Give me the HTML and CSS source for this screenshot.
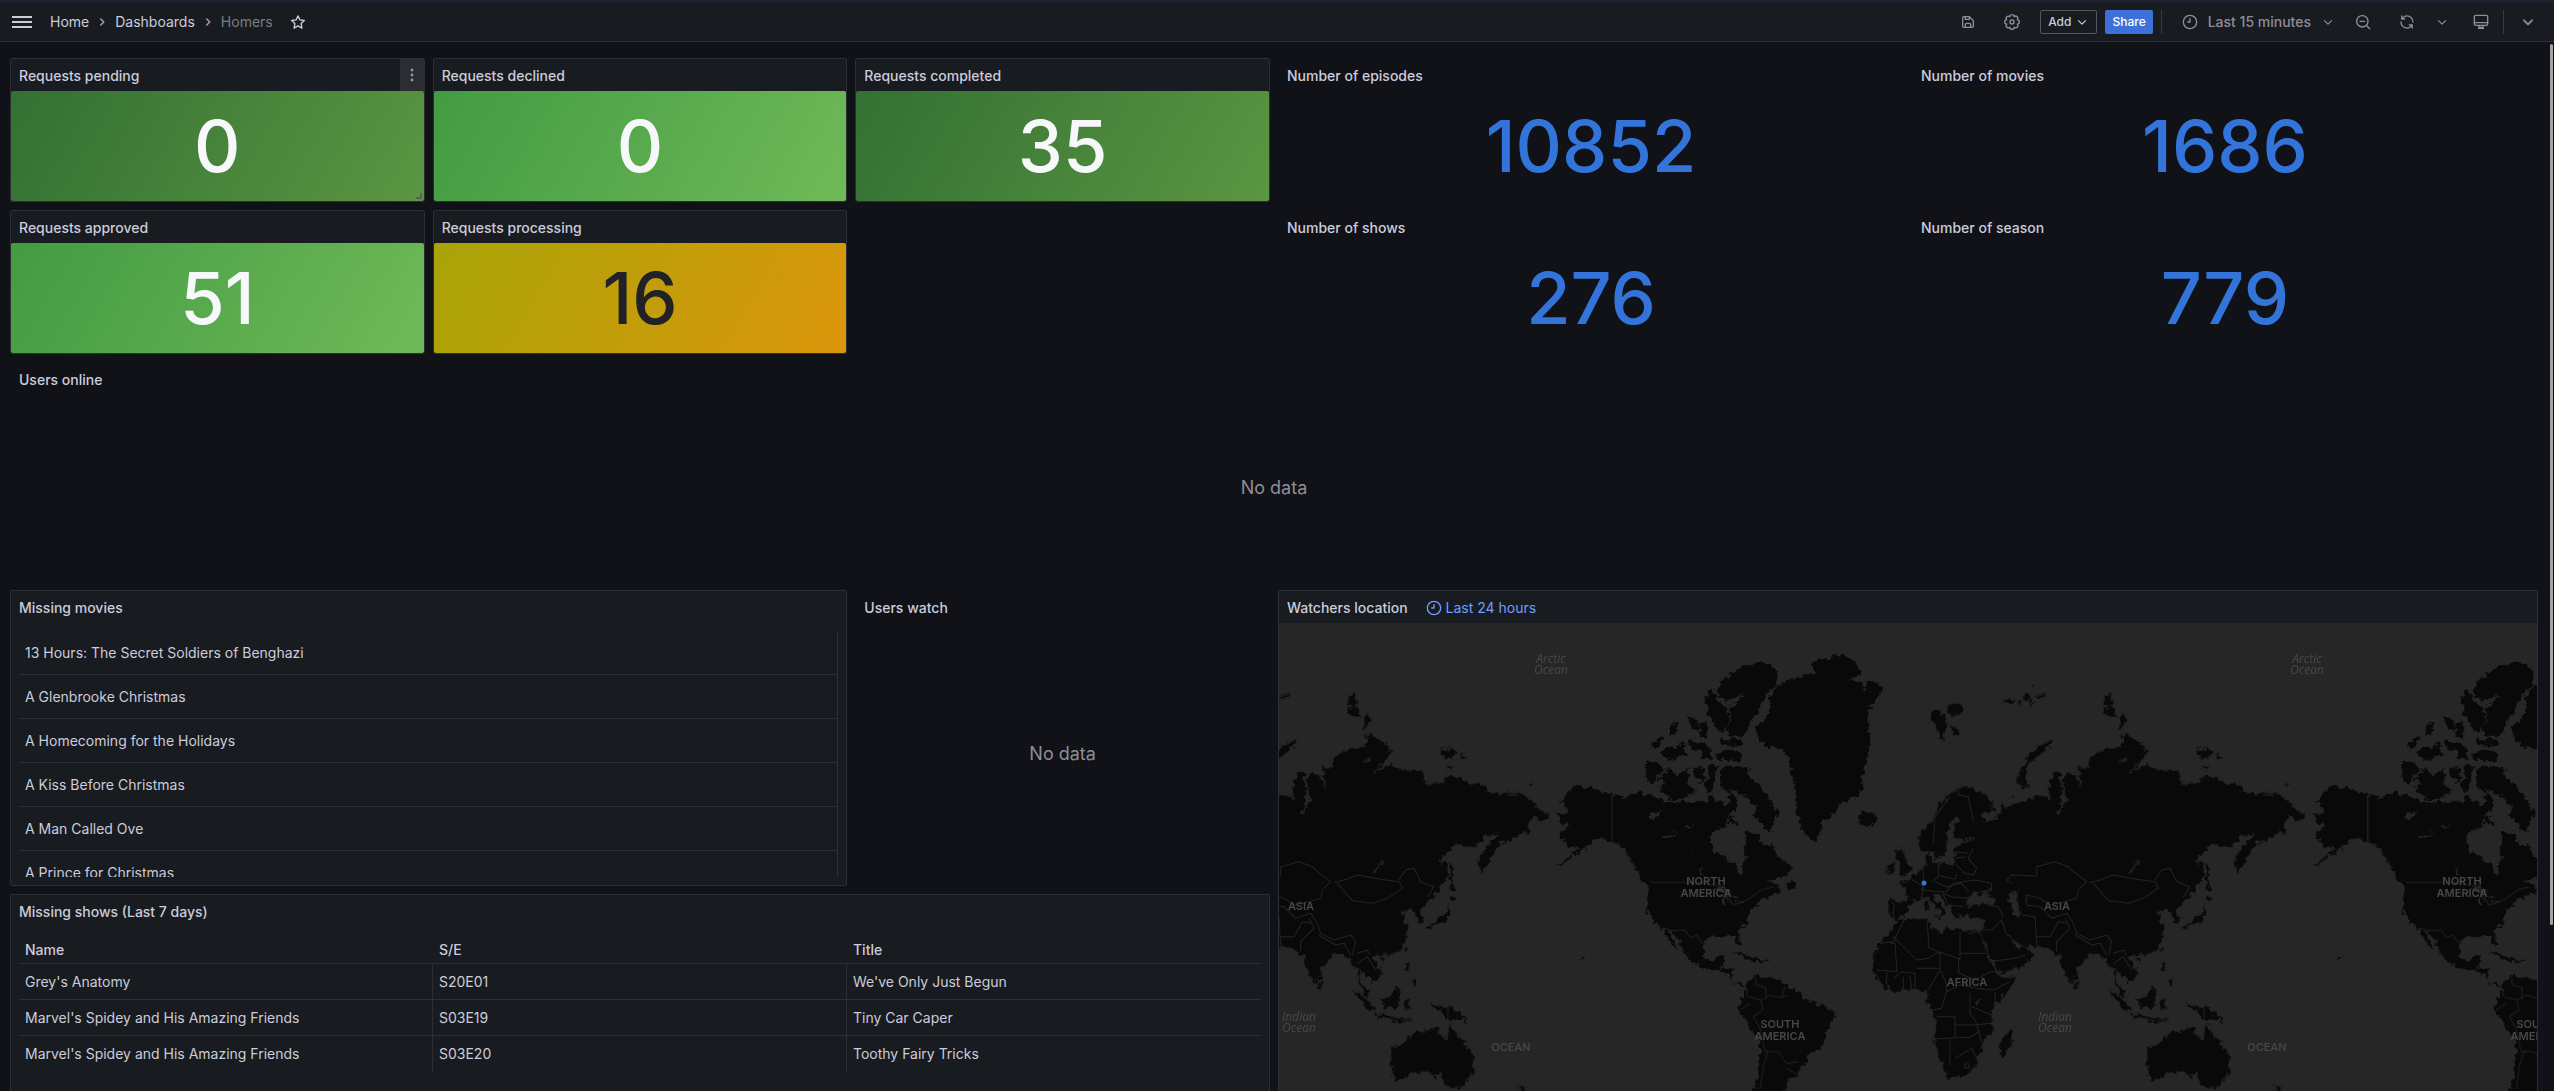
FILE: index.html
```html
<!DOCTYPE html>
<html lang="en">
<head>
<meta charset="utf-8">
<title>Homers - Dashboards</title>
<link rel="stylesheet" href="styles.css">
</head>
<body>
<svg class="defs" aria-hidden="true">
  <symbol id="i-angle" viewBox="0 0 24 24"><path class="line" d="M6 9.500l6 6 6-6"/></symbol>
  <symbol id="i-clock" viewBox="0 0 24 24"><circle class="line" cx="12" cy="12" r="10"/><path class="line" d="M12 7v5H8.500"/></symbol>
  <symbol id="i-save" viewBox="0 0 24 24"><path d="m20.71 9.290-6-6a1 1 0 0 0-.32-.21A1.090 1.090 0 0 0 14 3H6a3 3 0 0 0-3 3v12a3 3 0 0 0 3 3h12a3 3 0 0 0 3-3v-8a1 1 0 0 0-.29-.71ZM9 5h4v2H9Zm6 14H9v-3a1 1 0 0 1 1-1h4a1 1 0 0 1 1 1Zm4-1a1 1 0 0 1-1 1h-1v-3a3 3 0 0 0-3-3h-4a3 3 0 0 0-3 3v3H6a1 1 0 0 1-1-1V6a1 1 0 0 1 1-1h1v3a1 1 0 0 0 1 1h6a1 1 0 0 0 1-1V6.410l4 4Z"/></symbol>
  <symbol id="i-cog" viewBox="0 0 24 24"><path class="line" d="M19.800 8.800A3.200 3.200 0 0 1 19.800 15.200A3.200 3.200 0 0 1 15.200 19.800A3.200 3.200 0 0 1 8.800 19.800A3.200 3.200 0 0 1 4.200 15.200A3.200 3.200 0 0 1 4.200 8.800A3.200 3.200 0 0 1 8.800 4.200A3.200 3.200 0 0 1 15.200 4.200A3.200 3.200 0 0 1 19.800 8.800Z"/><circle class="line" cx="12" cy="12" r="3"/></symbol>
  <symbol id="i-zoom-out" viewBox="0 0 24 24"><circle class="line" cx="11" cy="11" r="8.500"/><path class="line" d="M7.500 11h7M17.500 17.500l4.500 4.500"/></symbol>
  <symbol id="i-sync" viewBox="0 0 24 24"><path d="M19.910 15.510h-4.530a1 1 0 0 0 0 2h2.400A8 8 0 0 1 4 12a1 1 0 1 0-2 0 10 10 0 0 0 16.880 7.230V21a1 1 0 0 0 2 0v-4.500a1 1 0 0 0-.970-.990ZM12 2a10 10 0 0 0-6.880 2.770V3a1 1 0 0 0-2 0v4.500a1 1 0 0 0 1 1h4.500a1 1 0 0 0 0-2h-2.400A8 8 0 0 1 20 12a1 1 0 0 0 2 0A10 10 0 0 0 12 2Z"/></symbol>
  <symbol id="i-monitor" viewBox="0 0 24 24"><rect class="line" x="2" y="2" width="20" height="15" rx="2"/><path class="line" d="M2 13h20M9 17v3h6v-3M8 21.500h8"/></symbol>
  <symbol id="i-star" viewBox="0 0 24 24"><path class="line" d="M12 2.800l2.900 6.100 6.600.9-4.800 4.600 1.200 6.700L12 17.900l-5.900 3.200 1.200-6.700-4.800-4.600 6.600-.9Z"/></symbol>
  <symbol id="i-menu" viewBox="0 0 20 12"><path d="M0 0h20v2H0ZM0 5h20v2H0ZM0 10h20v2H0Z"/></symbol>
  <symbol id="i-dots" viewBox="0 0 4 14"><circle cx="2" cy="2" r="1.400"/><circle cx="2" cy="7" r="1.400"/><circle cx="2" cy="12" r="1.400"/></symbol>
</svg>

<header class="topbar">
  <button class="icon-btn menu" aria-label="Open menu"><svg class="ico-menu"><use href="#i-menu"/></svg></button>
  <nav class="crumbs" aria-label="Breadcrumbs">
    <a href="#home">Home</a>
    <svg class="ico-sep"><use href="#i-angle"/></svg>
    <a href="#dashboards">Dashboards</a>
    <svg class="ico-sep"><use href="#i-angle"/></svg>
    <span class="current">Homers</span>
  </nav>
  <button class="icon-btn star" aria-label="Mark as favorite"><svg class="ico"><use href="#i-star"/></svg></button>
  <div class="tools">
    <button class="icon-btn" aria-label="Save dashboard"><svg class="ico"><use href="#i-save"/></svg></button>
    <button class="icon-btn" aria-label="Settings"><svg class="ico"><use href="#i-cog"/></svg></button>
    <div class="actions">
      <button class="btn btn-outline">Add <svg class="ico-sm"><use href="#i-angle"/></svg></button>
      <button class="btn btn-primary">Share</button>
      <span class="divider"></span>
    </div>
    <button class="icon-btn range"><svg class="ico"><use href="#i-clock"/></svg><span>Last 15 minutes</span><svg class="ico-sm"><use href="#i-angle"/></svg></button>
    <button class="icon-btn" aria-label="Zoom out"><svg class="ico"><use href="#i-zoom-out"/></svg></button>
    <button class="icon-btn refresh" aria-label="Refresh"><svg class="ico"><use href="#i-sync"/></svg><svg class="ico-sm"><use href="#i-angle"/></svg></button>
    <button class="icon-btn" aria-label="Kiosk mode"><svg class="ico"><use href="#i-monitor"/></svg></button>
    <span class="divider end"></span>
    <button class="icon-btn" aria-label="Hide toolbar"><svg class="ico bold"><use href="#i-angle"/></svg></button>
  </div>
</header>

<main class="scroll">
  <div class="grid">
    <section class="panel w4">
      <h2 class="title">Requests pending</h2>
      <button class="panel-menu" aria-label="Panel menu"><svg class="ico-dots"><use href="#i-dots"/></svg></button>
      <div class="stat green-dark">0</div>
      <span class="resize"></span>
    </section>
    <section class="panel w4"><h2 class="title">Requests declined</h2><div class="stat green">0</div></section>
    <section class="panel w4"><h2 class="title">Requests completed</h2><div class="stat green-dark">35</div></section>
    <section class="panel w6 clear"><h2 class="title">Number of episodes</h2><div class="stat blue">10852</div></section>
    <section class="panel w6 clear"><h2 class="title">Number of movies</h2><div class="stat blue">1686</div></section>

    <section class="panel w4"><h2 class="title">Requests approved</h2><div class="stat green">51</div></section>
    <section class="panel w4"><h2 class="title">Requests processing</h2><div class="stat yellow">16</div></section>
    <section class="panel w6 clear col13"><h2 class="title">Number of shows</h2><div class="stat blue">276</div></section>
    <section class="panel w6 clear"><h2 class="title">Number of season</h2><div class="stat blue">779</div></section>

    <section class="panel w24 h6 clear"><h2 class="title">Users online</h2><div class="empty">No data</div></section>

    <section class="panel w8 h8">
      <h2 class="title">Missing movies</h2>
      <div class="table-wrap">
        <table class="table tall">
          <tbody>
            <tr><td>13 Hours: The Secret Soldiers of Benghazi</td></tr>
            <tr><td>A Glenbrooke Christmas</td></tr>
            <tr><td>A Homecoming for the Holidays</td></tr>
            <tr><td>A Kiss Before Christmas</td></tr>
            <tr><td>A Man Called Ove</td></tr>
            <tr><td>A Prince for Christmas</td></tr>
          </tbody>
        </table>
      </div>
    </section>
    <section class="panel w4 h8 clear"><h2 class="title">Users watch</h2><div class="empty">No data</div></section>

    <section class="panel w12 h16">
      <div class="head">
        <h2 class="title">Watchers location</h2>
        <a class="override" href="#range"><svg class="ico"><use href="#i-clock"/></svg>Last 24 hours</a>
      </div>
      <svg class="map" viewBox="1279 623 1258 566" preserveAspectRatio="xMinYMin slice" role="img" aria-label="World map">
        <defs>
          <filter id="coast" x="0" y="0" width="100%" height="100%" color-interpolation-filters="sRGB">
            <feTurbulence type="fractalNoise" baseFrequency="0.18" numOctaves="3" seed="4"/>
            <feDisplacementMap in="SourceGraphic" scale="9" xChannelSelector="R" yChannelSelector="G"/>
          </filter>
          <g id="world">
            <g filter="url(#coast)">
            <g transform="translate(1540 660) scale(.333333)">
              <path class="land" d="M118 375L135 385 150 383 180 393 215 403 240 410 250 418 268 408 285 400 300 390 306 402 330 405 350 412 380 425 395 432 425 425 440 430 470 425 500 425 505 405 520 410 530 430 545 425 560 440 572 430 560 405 575 400 590 420 588 450 570 465 600 500 560 480 560 500 540 505 520 515 510 535 510 560 525 578 545 590 565 600 585 605 590 625 598 642 607 640 606 615 618 595 612 570 615 550 612 520 625 515 640 520 660 530 670 560 690 560 697 545 715 590 735 605 752 620 750 640 735 650 700 655 680 668 705 665 712 680 728 695 700 700 690 712 665 715 655 730 635 745 625 765 622 785 605 800 592 812 598 835 600 855 592 855 585 840 580 825 560 825 545 830 525 825 510 830 495 838 490 860 490 880 500 900 520 905 530 890 555 885 552 905 545 918 575 925 578 945 575 960 590 970 605 965 613 975 605 980 590 972 578 965 560 945 545 938 520 925 490 920 460 908 440 890 438 878 420 850 400 820 385 808 395 830 405 855 413 872 400 860 388 840 378 825 370 805 345 790 330 765 322 745 323 700 325 680 300 655 290 630 280 610 262 590 250 565 235 555 215 545 195 540 180 535 160 540 150 550 130 570 100 590 70 608 45 625 70 603 100 580 120 565 100 560 82 560 78 548 60 535 65 515 90 500 85 488 62 485 50 465 70 458 85 460 75 440 58 425 75 412 85 395 105 380Z"/>
              <path class="land" d="M320 305L340 303 378 325 355 350 335 375 313 350ZM355 360L370 340 388 325 405 335 410 350 425 340 440 325 445 350 445 380 465 390 455 410 430 415 405 422 380 410 365 400 360 380 375 370ZM470 320L495 318 495 345 485 368 465 350 460 335ZM500 315L533 318 525 345 520 375 522 400 505 395 495 370 510 345ZM540 330L560 318 600 320 625 325 625 345 650 370 675 395 685 420 715 455 700 490 695 515 670 500 650 480 635 465 650 450 640 430 620 410 600 400 580 395 560 395 545 385 540 360ZM525 278L600 272 600 300 530 300ZM540 235L610 238 605 258 540 255ZM330 262L345 240 372 228 365 250 350 262ZM365 275L385 255 410 268 420 245 440 250 432 270 445 290 420 290 395 302 370 285ZM385 210L395 190 412 190 410 215 395 225ZM440 170L460 170 480 190 475 215 455 205ZM445 235L470 250 490 250 510 260 515 298 490 295 485 270 455 272ZM485 185L505 190 500 235 480 228ZM500 100L515 90 530 110 540 130 560 145 570 180 560 200 540 215 520 195 505 165 497 130Z"/>
              <path class="land" d="M530 90L540 65 570 45 600 20 650 10 690 12 718 40 705 75 680 105 660 140 635 180 625 215 600 230 570 225 555 205 575 180 565 140 600 125 610 100 560 125 535 105ZM690 105L720 70 745 55 765 55 790 45 805 40 825 45 815 10 840-5 870-2 880-15 906-18 940 0 965 30 955 50 920 60 960 65 975 90 985 60 1010 70 1030 85 1015 110 985 150 985 200 990 240 985 290 970 330 965 360 968 385 950 410 905 430 885 460 850 480 840 520 828 548 800 530 780 490 770 460 770 410 760 370 755 330 745 290 720 265 690 265 650 230 648 200 670 185 690 160 690 130ZM955 465L965 458 1000 458 1017 478 985 502 962 495ZM752 650L765 665 770 688 735 682 745 665ZM575 878L600 875 640 897 655 897 690 905 650 908 635 903 600 883ZM120 893h8v8h-8Z"/>
              <path class="land" d="M615 975L635 950 660 948 665 957 690 955 715 958 735 975 760 988 780 995 790 1020 830 1030 870 1045 885 1068 870 1095 858 1110 855 1140 845 1165 820 1175 800 1188 795 1215 775 1240 765 1258 740 1255 745 1270 740 1290 715 1310 705 1350 690 1420 650 1450 640 1350 642 1290 655 1230 662 1170 660 1135 635 1115 620 1085 595 1050 598 1020 612 1008 618 990Z"/>
              <path class="water" d="M325 455l20 5 18-8-8 15-20 12ZM365 530l20-5 25-12-20 20-22 4ZM430 500l25-5 2 6ZM525 690l15-12 25 8 10 12-25 0ZM553 702h6v30h-8ZM575 700l18 8-8 12ZM580 730l30-12 2 6-28 10ZM482 620l12 28-10 4ZM455 565l8 20-6 4Z"/>
            </g>
            <g transform="translate(1860 660) scale(.333333)">
              <path class="land" d="M320 378L345 390 375 405 402 435 400 455 375 460 360 465 380 490 400 480 410 465 430 455 420 430 440 440 460 430 490 420 520 420 525 405 550 405 572 425 565 380 578 340 600 340 603 400 600 450 582 456 600 462 612 435 618 415 610 375 612 350 630 340 650 350 665 385 670 370 655 340 655 325 690 320 690 295 720 275 760 262 785 255 785 230 800 220 820 240 850 250 860 275 835 310 810 335 860 315 885 325 925 335 930 325 955 335 958 360 975 380 985 370 1020 370 1030 350 1060 348 1090 370 1145 380 1155 400 1210 400 1250 400 1290 425 1310 450 1338 462 1315 485 1290 465 1270 485 1272 515 1240 525 1215 545 1185 550 1170 580 1155 610 1132 645 1125 600 1140 570 1170 540 1183 515 1160 530 1145 527 1120 555 1050 555 1000 608 1030 615 1030 650 1010 680 990 710 975 728 955 738 945 758 960 780 955 792 940 785 938 765 925 755 920 742 905 755 885 755 905 770 895 785 910 800 912 830 895 860 870 878 835 888 820 885 805 895 832 930 830 950 808 968 795 950 780 945 770 930 765 950 775 975 792 995 798 1015 780 1000 765 970 760 925 745 920 735 890 720 880 690 885 650 925 650 950 632 970 615 940 603 905 600 885 580 880 570 865 550 860 510 858 495 860 475 850 450 825 460 845 470 860 500 862 520 880 505 905 480 920 420 942 410 920 390 880 370 840 362 825 370 800 372 775 350 778 320 765 310 770 290 755 300 780 285 775 270 745 250 720 235 705 215 700 230 725 260 750 245 770 240 755 215 725 200 710 180 718 160 722 145 745 130 768 105 778 88 768 88 720 140 722 138 690 118 672 150 655 165 645 190 625 200 615 195 590 210 575 215 600 225 612 285 612 285 580 282 560 320 545 345 540 300 540 280 530 280 505 300 480 285 470 270 500 255 520 262 550 250 590 225 598 220 575 180 570 177 520 215 490 235 430 270 405 295 385Z"/>
              <path class="land" d="M112 780L200 772 210 800 245 820 265 805 300 812 350 815 362 830 390 900 415 945 425 955 466 948 455 980 405 1035 392 1055 400 1110 380 1130 368 1160 352 1190 350 1215 320 1245 262 1255 240 1185 218 1135 230 1090 218 1050 200 1030 205 1000 185 990 150 990 95 992 60 970 38 935 40 890 60 850 85 820ZM455 1105L460 1120 440 1185 425 1188 418 1165 430 1130Z"/>
              <path class="land" d="M105 570L130 570 135 600 152 635 120 655 125 620 110 600ZM85 615L105 605 105 635 82 640ZM212 155L240 150 262 180 250 245 235 215 215 185ZM262 135L300 130 315 150 290 170 265 160ZM270 190L298 215 285 228ZM430 122l20-8 12 6-14 12ZM485 110l18-14 14 12-12 18ZM512 74l8 4-6 6ZM530 108l24-10-2 12-20 6ZM470 125l14 2-6 10ZM508 128l14-2-2 14ZM570 240L578 252 540 280 510 310 495 345 505 382 478 378 470 355 485 325 510 280 535 260ZM745 95L760 125 755 140 725 135ZM725 145L760 140 775 175 745 170ZM785 165L808 185 772 208ZM1010 265L1055 270 1050 290 1015 295ZM1065 280L1092 290 1075 295ZM1030 318l15 5-5 8-10-3ZM1270 375l15-8 8 8-12 5ZM448 408h12v9h-12ZM196 722h8v30h-8ZM222 768l20 0-4 8Z"/>
              <path class="land" d="M1037 612L1045 620 1045 670 1055 695 1040 695 1037 660ZM1035 705L1060 715 1040 725ZM1033 730L1038 760 1025 785 990 795 970 800 1000 780 1025 760ZM965 800l15 0-8 15ZM905 862l6 2-4 16-4-6ZM832 894l12 0-4 12-10-4ZM905 905l10 5 0 25-10-5ZM920 962l18-4 0 20-8 0ZM745 988L775 1005 810 1040 812 1060 780 1035ZM812 1060L860 1070 900 1078 930 1082 880 1084 820 1072ZM830 1018L860 1005 880 980 892 990 885 1030 870 1045 840 1040ZM900 1020l25-5-15 15 10 20-15-10-5 15ZM980 1030L1000 1040 1030 1040 1065 1055 1095 1088 1060 1075 1030 1078 1010 1050 985 1045ZM648 962l10 15-5 8-8-3ZM1040 1093L1055 1120 1075 1145 1105 1180 1110 1220 1090 1265 1065 1288 1035 1280 1010 1250 1005 1238 995 1250 970 1235 920 1240 895 1255 870 1258 862 1210 860 1165 905 1145 920 1120 945 1115 960 1118 975 1100 1005 1105 1000 1125 1030 1138ZM1235 1260L1250 1278 1268 1285 1245 1293 1250 1280Z"/>
              <path class="water" d="M340 692L355 706 385 698 400 715 405 737 370 730 320 738 325 710ZM445 702L475 690 470 720 480 765 465 768 455 735ZM832 600l4 2-10 24-20 16-4-3 18-15ZM345 1022l12 4-4 14-8-4ZM775 300l25-4 4 4-24 8ZM325 525l18 8-6 10ZM380 680l14 4-10 8Z"/>
            </g>
            </g>
            <g class="borders" transform="translate(1540 660) scale(.333333)">
              <path d="M216 403V543L260 580 290 625M330 667H480L540 680 580 735 625 718 665 690 700 680M370 805L400 812 435 810 450 832 470 825 490 853M545 915L540 935M615 975l8 35 40 10 5 30-28 20 20 35 5 20 10 50 40 0 25 35 35-5M665 1020l25-15 25 8 30-5M648 955l0 20 30 8 0 35M735 980l-10 30M600 1050l30-20M685 1170l-15 50-10 70M740 1225l35 20"/>
            </g>
            <g class="borders" transform="translate(1860 660) scale(.333333)">
              <path d="M455 670L440 660 455 645 530 648 530 620 585 605 625 620 640 635 680 665 655 690 650 715 615 725 570 735 540 715 500 705 498 735M690 668L720 660 760 645 830 658 885 665 895 685 850 715 805 730 745 722 700 670M885 660L905 630 930 625 950 665 990 680 970 712M500 735l40 5 35 35 45-15 20 30 10 30 40 20 50-15 15 20-10 40M530 860l-5-90-40-5M530 830l40 0 25-45 25 5M590 875l0-30 40-40-15-30M645 825l50 30 25-5 20 35M760 880l30-10 10 15M760 910l30-20 25 40M430 770l-15-30-30-5M375 810l20 0 30-30 15 45 15 5M370 780l0 20M385 905l80-10 30-10"/>
              <path d="M295 385l0 20 30 5 15 75M270 410l-45 60-5 80M285 575l40 5M285 595l35-5M285 612l30 28 25 5 10-20-25-30 15-30M235 612l0 35 50 10 5-15M190 625l0 50-5 15 50 5 25 0 20-25 65-10 50 10 0 20-50 8M235 650l-20 15M225 665l35 15 45-10 20 25M245 700l30 10 50 5M250 705l15 30 45 5M150 655l40 25-5 38M95 725l8 10-5 35"/>
              <path d="M200 772l5 60 0 30 35 15 60 20 0-83M100 830l70 70 35-5 35-20 0 50-70 0M90 850l15 0 5 75 0 10-60-5M60 850l40-5 35-70M300 880h80M296 895l0 45 50 20 45-25 20 0M240 925l20 50 0 20 40-20 50 10 50 5 50-25M165 985l0-45-40-5-25 20M130 990l0-40M155 988l-5-40M240 930l-35 60M260 995l-15 50-25 5M330 1000l0 60 20 30 15 60M335 1040l60 25M230 1070l55 0 0 65M220 1137l110-5 30-20M270 1140l0 75M285 1195l50-30 15 30M285 1095l50 0 60-5M405 1030l0-35M50 945l15 30M80 935l0 40"/>
              <path d="M1032 1040V1078M790 1000l20 5"/>
              <circle cx="321" cy="1218" r="7"/>
            </g>
            <g class="places">
              <text x="1706" y="885">NORTH</text><text x="1706" y="897">AMERICA</text>
              <text x="1780" y="1028">SOUTH</text><text x="1780" y="1040">AMERICA</text>
              <text x="2057" y="910">ASIA</text><text x="1967" y="986">AFRICA</text>
              <text class="thin" x="2267" y="1051">OCEAN</text>
            </g>
            <g class="seas">
              <text x="2055" y="1021">Indian</text><text x="2055" y="1032">Ocean</text>
              <text x="1551" y="663">Arctic</text><text x="1551" y="674">Ocean</text>
            </g>
          </g>
        </defs>
        <use href="#world" x="-756"/>
        <use href="#world"/>
        <use href="#world" x="756"/>
        <circle class="marker" cx="1924" cy="883" r="2.500"/>
      </svg>
    </section>

    <section class="panel w12 h8">
      <h2 class="title">Missing shows (Last 7 days)</h2>
      <div class="table-wrap">
        <table class="table multi">
          <thead><tr><th>Name</th><th>S/E</th><th>Title</th></tr></thead>
          <tbody>
            <tr><td>Grey's Anatomy</td><td>S20E01</td><td>We've Only Just Begun</td></tr>
            <tr><td>Marvel's Spidey and His Amazing Friends</td><td>S03E19</td><td>Tiny Car Caper</td></tr>
            <tr class="last"><td>Marvel's Spidey and His Amazing Friends</td><td>S03E20</td><td>Toothy Fairy Tricks</td></tr>
          </tbody>
        </table>
      </div>
    </section>
  </div>
  <span class="thumb"></span>
</main>
</body>
</html>
```

FILE: styles.css
```css
:root {
  --bg: #111217;
  --panel: #181b1f;
  --line: #2d2f34;
  --text: #ccccdc;
  --muted: #8e8e99;
}

* { box-sizing: border-box; }

body {
  margin: 0;
  height: 100vh;
  display: flex;
  flex-direction: column;
  overflow: hidden;
  background: var(--bg);
  color: var(--text);
  font: 14px/22px Inter, Roboto, sans-serif;
}

.defs { display: none; }

svg { fill: currentColor; flex: none; }
.line {
  fill: none;
  stroke: currentColor;
  stroke-width: var(--stroke, 2);
  stroke-linecap: round;
  stroke-linejoin: round;
}

.ico { width: 16px; height: 16px; }
.ico-sm { width: 14px; height: 14px; }
.ico-menu { width: 20px; height: 12px; }
.ico-dots { width: 4px; height: 14px; }
.ico-sep { width: 12px; height: 12px; color: #a0a0ac; transform: rotate(-90deg); --stroke: 3; }
.bold { --stroke: 3; }

button {
  font: inherit;
  color: inherit;
  background: none;
  border: 0;
  padding: 0;
}

a { color: inherit; text-decoration: none; }

/* Top bar */
.topbar {
  display: flex;
  align-items: center;
  height: 42px;
  flex: none;
  padding: 0 18px 0 12px;
  background: var(--panel);
  border-top: 2px solid #211f35;
  border-bottom: 1px solid var(--line);
}

.icon-btn { display: flex; align-items: center; color: var(--muted); }
.menu, .star { color: var(--text); }
.star { margin-left: 17px; }

.crumbs { display: flex; align-items: center; gap: 7px; margin-left: 18px; }
.current { color: #7b7b86; }

.tools { display: flex; align-items: center; gap: 28px; margin-left: auto; }
.actions { display: flex; align-items: center; gap: 8px; margin: 0 -8px; }

.btn {
  display: flex;
  align-items: center;
  gap: 4px;
  height: 24px;
  padding: 0 7px;
  border-radius: 2px;
  font-size: 12px;
  font-weight: 500;
}
.btn-outline { border: 1px solid #55565f; }
.btn-primary { background: #3d71d9; color: #fff; }

.divider { width: 1px; height: 24px; background: #393b42; }
.end { margin: 0 -12px 0 -14px; }

.range { font-weight: 500; gap: 10px; margin-right: -8px; }
.refresh { gap: 20px; margin-right: -4px; }

/* Dashboard grid */
.scroll { position: relative; flex: 1; min-height: 0; overflow: hidden; }

.grid {
  display: grid;
  grid-template-columns: repeat(24, minmax(0, 1fr));
  grid-auto-rows: 30px;
  gap: 8px;
  padding: 16px 16px 16px 10px;
}

.thumb {
  position: absolute;
  top: 2px;
  right: 1px;
  width: 3px;
  height: 84%;
  border-radius: 2px;
  background: #a3a29f;
}

.panel {
  position: relative;
  display: flex;
  flex-direction: column;
  grid-row: span 4;
  min-height: 0;
  background: var(--panel);
  border: 1px solid var(--line);
  border-radius: 2px;
  overflow: hidden;
}
.clear { background: none; border-color: transparent; }

.w4 { grid-column-end: span 4; }
.w6 { grid-column-end: span 6; }
.w8 { grid-column-end: span 8; }
.w12 { grid-column-end: span 12; }
.w24 { grid-column-end: span 24; }
.col13 { grid-column-start: 13; }
.h6 { grid-row: span 6; }
.h8 { grid-row: span 8; }
.h16 { grid-row: span 16; }

.title {
  flex: none;
  margin: 0;
  padding: 0 8px;
  font-size: 14px;
  font-weight: 500;
  line-height: 34px;
  height: 32px;
}

.head { display: flex; align-items: flex-start; flex: none; height: 32px; gap: 10px; }
.override { display: flex; align-items: center; gap: 4px; color: #6e9fff; line-height: 34px; }

.panel-menu {
  position: absolute;
  top: 0;
  right: 0;
  width: 24px;
  height: 32px;
  display: grid;
  place-items: center;
  color: #9a9aa4;
  background: #2b2d32;
}

.stat {
  flex: 1;
  display: flex;
  align-items: center;
  justify-content: center;
  border-radius: 2px;
  color: #f7f8fa;
  font-size: 72px;
  font-weight: 500;
  line-height: 88px;
}
.green-dark { background: linear-gradient(120deg, #337033, #5b9642); }
.green { background: linear-gradient(120deg, #429b43, #70b958); }
.yellow { background: linear-gradient(120deg, #a8a407, #dc960c); color: #202226; }
.blue { color: #3274d9; }

.resize {
  position: absolute;
  right: 2px;
  bottom: 2px;
  width: 6px;
  height: 6px;
  border: solid #5c5e63;
  border-width: 0 2px 2px 0;
}

.empty {
  flex: 1;
  display: flex;
  align-items: center;
  justify-content: center;
  color: var(--muted);
  font-size: 18px;
}

/* Tables */
.table-wrap { flex: 1; min-height: 0; margin: 8px; overflow: hidden; }
.table {
  width: 100%;
  table-layout: fixed;
  border-collapse: separate;
  border-spacing: 0;
}
.table td, .table th {
  padding: 0 6px;
  text-align: left;
  white-space: nowrap;
  overflow: hidden;
  border-bottom: 1px solid var(--line);
}
.table td { height: 36px; border-right: 1px solid var(--line); }
.table th { height: 29px; padding-top: 2px; font-weight: 500; }
.tall td { height: 44px; }
.multi td:last-child { border-right: 0; }
.last td { border-bottom: 0; }

/* Map */
.map { display: block; flex: 1; min-height: 0; width: 100%; background: #262626; }
.land { fill: #090909; }
.water { fill: #262626; }
.borders { fill: none; stroke: #242424; stroke-width: 3; stroke-linejoin: round; }
.places { fill: #484848; font: 600 11px Inter, sans-serif; text-anchor: middle; }
.thin { font-weight: 500; }
.seas { fill: #484848; font: italic 12px "Open Sans", sans-serif; text-anchor: middle; }
.marker { fill: #3274d9; }
```
